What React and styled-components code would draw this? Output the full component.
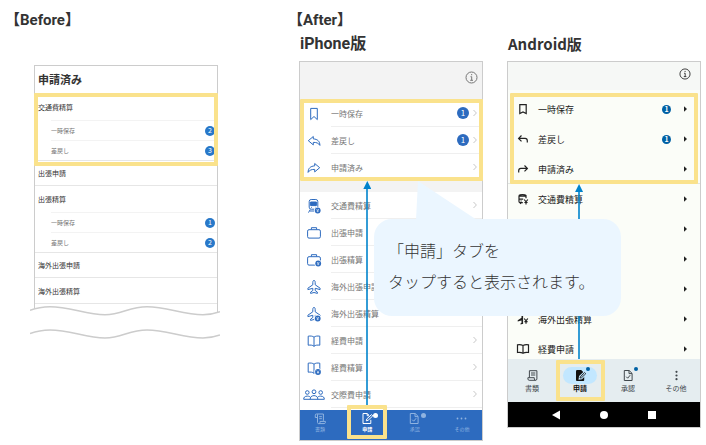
import React from "react";
import styled, { createGlobalStyle, css } from "styled-components";

const GlobalStyle = createGlobalStyle`
  * {
    box-sizing: border-box;
  }
  body {
    margin: 0;
    background: #fff;
    color: #333;
    font-family: "Noto Sans CJK JP", sans-serif;
  }
  button {
    background: transparent;
    border: 0;
    color: inherit;
    cursor: pointer;
    font: inherit;
    margin: 0;
    padding: 0;
  }
  a {
    color: inherit;
    text-decoration: none;
  }
  svg {
    display: block;
  }
`;

const Page = styled.main`
  display: grid;
  grid-template-columns: 216fr 414fr;
  gap: 67px;
  padding: 8px 5px 4px 4px;
`;

const Title = styled.h2`
  margin: 0;
  padding-left: 1px;
  font-size: 15px;
  line-height: 24px;
  font-weight: bold;
  font-family: Roboto, "Noto Sans CJK JP", sans-serif;
`;

const Label = styled.h3`
  margin: 0 0 5px;
  padding-left: 1px;
  font-size: ${p => (p.$android ? 15 : 16)}px;
  line-height: 24px;
  font-weight: bold;
  font-family: ${p => (p.$android ? "" : "Roboto, ")}"Noto Sans CJK JP", sans-serif;
`;

const Highlight = styled.span`
  position: absolute;
  inset: ${p => p.$inset};
  border: 4px solid #fae28c;
  border-radius: 1px;
  pointer-events: none;
  z-index: 2;
`;

const Group = styled.div`
  position: relative;
`;

const Badge = styled.span`
  display: flex;
  align-items: center;
  justify-content: center;
  flex: none;
  width: ${p => p.$size}px;
  height: ${p => p.$size}px;
  border-radius: 50%;
  background: ${p => p.$color};
  color: #fff;
  font-size: ${p => p.$font || 7}px;
  line-height: 1;
  font-weight: ${p => (p.$bold ? "bold" : "normal")};
`;

/* Before */

const OldScreen = styled.div`
  margin: 33px 2px 0 30px;
  padding-bottom: 8px;
  border: 1px solid #ccc;
  border-bottom: 0;
`;

const OldHeader = styled.h3`
  margin: 0;
  padding: 0 0 2px 3px;
  font-size: 11px;
  line-height: 26px;
  font-weight: bold;
`;

const OldRow = styled.a`
  display: flex;
  align-items: center;
  height: 26px;
  padding-left: 3px;
  border-bottom: 1px solid ${p => (p.$plain ? "transparent" : "#e6e6e6")};
  font-size: 7px;
`;

const OldSubRow = styled.a`
  display: flex;
  align-items: center;
  justify-content: space-between;
  height: 20px;
  margin-left: 16px;
  padding-right: 2px;
  border-top: 1px solid #f3f3f3;
  color: #777;
  font-size: 6px;
`;

const Divider = styled.div`
  height: 1px;
  margin-bottom: -1px;
  background: #e6e6e6;
`;

const Waves = styled.svg`
  position: relative;
  width: calc(100% - 26px);
  height: auto;
  margin: -8px 0 0 26px;
`;

/* After */

const Phones = styled.div`
  position: relative;
  display: grid;
  grid-template-columns: 184fr 194fr;
  gap: 24px;
  align-items: start;
  margin-left: 12px;
`;

const Screen = styled.div`
  position: relative;
  border: 1px solid #ccc;
  background: ${p => (p.$android ? "#fbfdf8" : "#fff")};
`;

const Header = styled.header`
  display: flex;
  justify-content: flex-end;
  ${p =>
    p.$android
      ? css`
          height: 32px;
          padding: 5px 9px 0 0;
          background: linear-gradient(#f6f8f6 28px, #fbfdf8 28px);
        `
      : css`
          height: 38px;
          padding: 9px 4px 0 0;
          background: #f3f3f3;
        `};
`;

const InfoButton = styled.button`
  height: 13px;
  color: ${p => (p.$android ? "#333" : "#777")};
`;

const Spacer = styled.div`
  height: 11px;
  background: #f3f3f3;
`;

const IosRow = styled.a`
  display: flex;
  align-items: center;
  gap: 6px;
  height: 27px;
  padding-left: 3px;
  color: #2d6bbf;
`;

const IosBody = styled.span`
  display: flex;
  flex: 1;
  align-items: center;
  gap: 4px;
  height: 27px;
  padding-right: 5px;
  border-bottom: 1px solid #efefef;
  color: #777;
  font-size: 8px;
`;

const AndroidList = styled.div`
  height: 175px;
  overflow: hidden;
  box-shadow: 0 -1px #e1e5e2;
`;

const AndroidRow = styled.a`
  display: flex;
  align-items: center;
  gap: 5px;
  height: 30px;
  padding: 0 13px 0 5px;
  color: #222;
  font-size: 9px;
`;

const RowEnd = styled.span`
  display: flex;
  align-items: center;
  gap: ${p => p.$gap}px;
  margin-left: auto;
`;

const RowText = styled.span`
  white-space: nowrap;
`;

const IosTabs = styled.nav`
  display: flex;
  justify-content: space-between;
  height: 30px;
  margin-top: 2px;
  background: #2d6bbf;
`;

const IosTab = styled.button`
  position: relative;
  display: flex;
  flex-direction: column;
  align-items: center;
  width: 40px;
  padding-top: 2px;
  color: ${p => (p.$active ? "#fff" : "#8fb3e0")};
  font-size: 5px;
  line-height: 7px;
  font-weight: ${p => (p.$active ? "bold" : "normal")};
`;

const AndroidTabs = styled.nav`
  display: grid;
  grid-template-columns: repeat(4, 1fr);
  height: 43px;
  background: #e5edf0;
`;

const AndroidTab = styled.button`
  position: relative;
  display: flex;
  flex-direction: column;
  align-items: center;
  padding-top: 8px;
  color: ${p => (p.$active ? "#111" : "#41484d")};
  font-size: 7px;
  line-height: 8px;
  font-weight: ${p => (p.$active ? "bold" : "normal")};
`;

const Pill = styled.span`
  display: flex;
  align-items: center;
  justify-content: center;
  width: 34px;
  height: 17px;
  border-radius: 9px;
  background: ${p => (p.$active ? "#c2e7ff" : "transparent")};
`;

const Dot = styled.span`
  position: absolute;
  top: ${p => (p.$android ? 8 : 3)}px;
  left: calc(50% + 6px);
  width: ${p => (p.$android ? 4 : 5)}px;
  height: ${p => (p.$android ? 4 : 5)}px;
  border-radius: 50%;
  background: ${p => p.$color};
`;

const SystemBar = styled.div`
  display: flex;
  justify-content: space-around;
  height: 25px;
  padding: 0 24px;
  background: #000;
  color: #fff;
`;

const SystemButton = styled.button`
  display: flex;
  align-items: center;
  justify-content: center;
  width: 24px;
`;

const Arrow = styled.span`
  position: absolute;
  top: ${p => p.$top}px;
  bottom: ${p => p.$bottom}px;
  left: calc(37% - 4px);
  display: flex;
  flex-direction: column;
  align-items: center;
  width: 8px;
  pointer-events: none;
  z-index: 1;

  &::before {
    content: "";
    width: 8px;
    height: 8px;
    background: #0083cc;
    clip-path: polygon(50% 0, 100% 100%, 0 100%);
  }
  &::after {
    content: "";
    flex: 1;
    width: 2px;
    background: #0083cc;
    opacity: 0.8;
  }
`;

const Callout = styled.p`
  position: absolute;
  top: 187px;
  left: 75px;
  margin: 0;
  padding: 16px 27px 19px 14px;
  border-radius: 18px;
  background: #ebf6ff;
  font-size: 16px;
  font-weight: 300;
  line-height: 31px;
  white-space: nowrap;
  z-index: 3;

  &::before {
    content: "";
    position: absolute;
    top: -38px;
    left: 42px;
    width: 61px;
    height: 39px;
    background: #ebf6ff;
    clip-path: polygon(2px 0, 100% 100%, 0 100%);
  }
`;

const Yen = ({ x, y }) => (
  <g>
    <circle cx={x} cy={y} r="3.7" fill="#fff" stroke="none" />
    <circle cx={x} cy={y} r="2.9" fill="currentColor" stroke="none" />
    <path
      d={`M${x - 1.2} ${y - 1.5}l1.2 1.4 1.2-1.4M${x} ${y}v1.7M${x - 1.1} ${y + 0.5}h2.2`}
      stroke="#fff"
      strokeWidth=".6"
    />
  </g>
);

const planePath =
  "M11 2.4c-.9 0-1.2 1.2-1.2 2.2v2.2l-4.9 3.4v1.4l4.9-1.3v2.2l-2.2 1.6v1.3l3.4-.9 3.4.9v-1.3l-2.2-1.6v-2.2l4.9 1.3v-1.4l-4.9-3.4V4.6c0-1-.3-2.2-1.2-2.2z";
const bookPath =
  "M11 5.2C9.500 4 7.500 3.800 5.200 4.200v9C7.500 12.900 9.500 13 11 14.300c1.500-1.300 3.500-1.400 5.800-1.100v-9c-2.300-.4-4.300-.2-5.800 1zV14.300";
const bagPath =
  "M6 5.700h10a1.400 1.400 0 0 1 1.400 1.400v5.600a1.400 1.400 0 0 1-1.400 1.400H6a1.400 1.400 0 0 1-1.400-1.400V7.100A1.400 1.400 0 0 1 6 5.700zM8.400 5.500V3.700h5.200v1.800";

const iosIcons = {
  bookmark: <path d="M7.700 3.400h6.600v11.200L11 11.500l-3.300 3.100z" />,
  reply: (
    <path d="M10.300 4.500L5.300 8.700l5 4.200v-2.500c3-.1 5.200.6 6.600 3 0-4-2.300-6.300-6.600-6.500z" />
  ),
  forward: (
    <path d="M11.700 4.500l5 4.200-5 4.200v-2.500c-3-.1-5.200.6-6.600 3 0-4 2.300-6.300 6.600-6.500z" />
  ),
  train: (
    <g>
      <rect x="6.200" y="2.500" width="8.600" height="9.700" rx="2" />
      <path d="M7.600 5h5.800v3.600H7.600z" fill="currentColor" />
      <path d="M8 10.400h.8M12.200 10.400h.8M7.200 12.600l-1.700 3M7 14h5" />
      <Yen x={14.7} y={13.5} />
    </g>
  ),
  bag: <path d={bagPath} />,
  bagYen: (
    <g>
      <path d={bagPath} />
      <Yen x={15.2} y={12.5} />
    </g>
  ),
  plane: <path d={planePath} />,
  planeYen: (
    <g>
      <path d={planePath} />
      <Yen x={14.7} y={13.5} />
    </g>
  ),
  book: <path d={bookPath} />,
  bookYen: (
    <g>
      <path d={bookPath} />
      <Yen x={15} y={13} />
    </g>
  ),
  people: (
    <g>
      <circle cx="4.300" cy="6.500" r="1.800" />
      <circle cx="11" cy="5.800" r="1.900" />
      <circle cx="17.700" cy="6.500" r="1.800" />
      <path d="M.7 13.300c0-2 .9-3 3.600-3.200 1.800.1 2.700.5 3.200 1.400M21.300 13.300c0-2-.9-3-3.600-3.200-1.800.1-2.700.5-3.200 1.400M.7 13.300h20.600M7.200 13.300c0-2.300 1.100-3.500 3.800-3.700 2.700.2 3.800 1.400 3.800 3.700" />
    </g>
  )
};

const androidIcons = {
  bookmark: <path d="M6.800 4.700h6.400v8.800L10 12l-3.200 1.500z" />,
  reply: <path d="M8.500 5.500L5.600 8.400l2.900 2.900M5.900 8.400h6.200c1.400 0 2.200 1 2.200 2.300v1.800" />,
  forward: <path d="M11.500 5.500l2.900 2.900-2.900 2.900M14.100 8.400H7.900c-1.400 0-2.200 1-2.200 2.300v1.800" />,
  train: (
    <g>
      <path d="M6 5.500c1-1.200 6-1.200 7 0v2.700M6 5.500v6c0 .8.500 1.200 1.200 1.200h2.600M6 6.200h7M6 9.200h4.200" />
      <path d="M7.500 11h1.200M7 13.800l1-1" />
      <path d="M11.200 9.500l1.800 2.300 1.800-2.300M13 11.800v2.700M11.400 12.500h3.200" strokeWidth="1.200" />
    </g>
  ),
  plane: (
    <g>
      <path
        d="M9.300 4c-.5 0-.8.5-.8 1v2.800L4.700 10.300v1.200l3.800-1.100v2.300l-1 .9v.8l1.800-.5.8.2V5c0-.5-.3-1-.8-1z"
        fill="currentColor"
        stroke="none"
      />
      <path d="M11.200 8.500l1.800 2.300 1.800-2.300M13 10.800v3M11.400 11.700h3.200" strokeWidth="1.200" />
    </g>
  ),
  book: <path d="M10 5.500C8.500 4.700 6.500 4.500 4.500 4.800v7.700c2-.3 4-.1 5.500.7 1.500-.8 3.500-1 5.500-.7V4.800c-2-.3-4-.1-5.500.7zv7.500" />
};

const IosIcon = ({ name }) => (
  <svg
    width="22"
    height="18"
    viewBox="0 0 22 18"
    fill="none"
    stroke="currentColor"
    strokeWidth="1"
    strokeLinejoin="round"
    aria-hidden="true"
  >
    {iosIcons[name]}
  </svg>
);

const AndroidIcon = ({ name }) => (
  <svg
    width="20"
    height="18"
    viewBox="0 0 20 18"
    fill="none"
    stroke="currentColor"
    strokeWidth="1.200"
    aria-hidden="true"
  >
    {androidIcons[name]}
  </svg>
);

const InfoIcon = ({ size }) => (
  <svg width={size} height={size} viewBox="0 0 13 13" fill="none" stroke="currentColor">
    <circle cx="6.500" cy="6.500" r="5.500" />
    <path d="M5.500 5.700h1.200v3.600M5.200 9.300h2.800M6 3.700h1.200" />
  </svg>
);

const tabIcons = {
  scroll: (
    <path d="M3.500 5.500H1.300V3.200c0-.8.400-1.200 1.100-1.200h7v6.800M3.500 2.300v8.200M5.200 4.700h2.700M5.200 6.700h2.700M3.500 10.600c0 .6.400 1 1 1h5.700c.7 0 1.200-.5 1.200-1.200v-1H6v1c0 .7-.5 1.200-1.200 1.200" />
  ),
  edit: (
    <path d="M9.800 7.800v3.700H2V1.500h4.300l1.600 1.700M6.200 1.700v2h1.700M5.300 8.800l.5-1.900 4.800-4.300 1.200 1.300-4.700 4.400z" />
  ),
  check: <path d="M2.300 1.500h4.900l2.900 2.900v7.100H2.300zM7 1.700v2.900h3M4.200 7.700l1.500 1.500 2.500-3" />,
  dots: (
    <g fill="currentColor" stroke="none">
      <circle cx="2.500" cy="6.500" r=".9" />
      <circle cx="6.500" cy="6.500" r=".9" />
      <circle cx="10.500" cy="6.500" r=".9" />
    </g>
  ),
  receipt: (
    <path d="M3.400 8.600V1.700h7.500v8.200c0 .8-.5 1.400-1.300 1.400H3.200c-.8 0-1.300-.6-1.300-1.400V8.700h6.400v1.200c0 .8.500 1.400 1.300 1.400M5 4h4.300M5 6h4.300" />
  ),
  editFilled: (
    <g>
      <path
        d="M2 2.300C2 1.600 2.500 1 3.200 1h4l3 3v7c0 .6-.5 1-1.200 1H3.200C2.500 12 2 11.500 2 11z"
        fill="currentColor"
        stroke="none"
      />
      <path d="M5.700 9.500l.3-1.900 4.500-4.300 1.500 1.500-4.500 4.400z" stroke="#c2e7ff" strokeWidth="2" />
      <path d="M6 9l.3-1.400 4.300-4.100 1.200 1.200-4.300 4.100z" strokeWidth=".8" />
    </g>
  ),
  more: (
    <g fill="currentColor" stroke="none">
      <circle cx="6.500" cy="2.800" r="1.100" />
      <circle cx="6.500" cy="6.500" r="1.100" />
      <circle cx="6.500" cy="10.200" r="1.100" />
    </g>
  )
};

const TabIcon = ({ name }) => (
  <svg width="13" height="13" viewBox="0 0 13 13" fill="none" stroke="currentColor">
    {tabIcons[name]}
  </svg>
);

const Chevron = () => (
  <svg width="4" height="8" viewBox="0 0 4 8" fill="none" stroke="#c8c8c8">
    <path d="M.5 1L3.400 4 .5 7" />
  </svg>
);

const Triangle = () => (
  <svg width="3" height="6" viewBox="0 0 3 6" fill="currentColor">
    <path d="M0 .3L3 3 0 5.700z" />
  </svg>
);

const oldRows = [
  { name: "出張申請" },
  { name: "出張精算", children: [["一時保存", 1], ["差戻し", 2]] },
  { name: "海外出張申請" },
  { name: "海外出張精算" }
];

const statusRows = [
  { icon: "bookmark", name: "一時保存", count: 1 },
  { icon: "reply", name: "差戻し", count: 1 },
  { icon: "forward", name: "申請済み" }
];

const iosRows = [
  { icon: "train", name: "交通費精算" },
  { icon: "bag", name: "出張申請" },
  { icon: "bagYen", name: "出張精算" },
  { icon: "plane", name: "海外出張申請" },
  { icon: "planeYen", name: "海外出張精算" },
  { icon: "book", name: "経費申請" },
  { icon: "bookYen", name: "経費精算" },
  { icon: "people", name: "交際費申請" }
];

// the empty rows lie under the callout, only their arrows show
const androidRows = [
  { icon: "train", name: "交通費精算" },
  {},
  {},
  {},
  { icon: "plane", name: "海外出張精算" },
  { icon: "book", name: "経費申請" }
];

const OldItem = ({ name, children = [] }) => (
  <>
    <OldRow href="#" $plain={children.length > 0}>
      {name}
    </OldRow>
    {children.map(([label, count]) => (
      <OldSubRow href="#" key={label}>
        {label}
        <Badge $size={10} $color="#2878c9">
          {count}
        </Badge>
      </OldSubRow>
    ))}
    {children.length > 0 && <Divider />}
  </>
);

const IosItem = ({ icon, name, count }) => (
  <IosRow href="#">
    <IosIcon name={icon} />
    <IosBody>
      <RowText>{name}</RowText>
      <RowEnd $gap={4}>
        {count && (
          <Badge $size={12} $color="#2d6bbf" $font={8}>
            {count}
          </Badge>
        )}
        <Chevron />
      </RowEnd>
    </IosBody>
  </IosRow>
);

const AndroidItem = ({ icon, name, count }) => (
  <AndroidRow href="#">
    {icon && <AndroidIcon name={icon} />}
    {name && <RowText>{name}</RowText>}
    <RowEnd $gap={13}>
      {count && (
        <Badge $size={9} $color="#0061a4" $bold>
          {count}
        </Badge>
      )}
      <Triangle />
    </RowEnd>
  </AndroidRow>
);

const Before = () => (
  <section>
    <Title>【Before】</Title>
    <OldScreen>
      <OldHeader>申請済み</OldHeader>
      <Group>
        <OldItem name="交通費精算" children={[["一時保存", 2], ["差戻し", 3]]} />
        <Highlight $inset="-1px -1px -5px" />
      </Group>
      {oldRows.map(row => (
        <OldItem key={row.name} {...row} />
      ))}
    </OldScreen>
    <Waves viewBox="0 0 190 38" fill="none" stroke="#ccc" strokeWidth="1.500">
      <path
        d="M0 6.300C6 4 12 2.700 20 2.700c20 0 36 8 55 8 17 0 24-8 42-8 20 0 36 8 56 8 7 0 12-1.200 17-3V38H0z"
        fill="#fff"
        stroke="none"
      />
      <path d="M0 6.300C6 4 12 2.700 20 2.700c20 0 36 8 55 8 17 0 24-8 42-8 20 0 36 8 56 8 7 0 12-1.200 17-3" />
      <path d="M0 29.600C6 27.300 12 26 20 26c20 0 36 8 55 8 17 0 24-8 42-8 20 0 36 8 56 8 7 0 12-1.200 17-3" />
    </Waves>
  </section>
);

const IPhone = () => (
  <div>
    <Label>iPhone版</Label>
    <Screen>
      <Header>
        <InfoButton aria-label="情報">
          <InfoIcon size={13} />
        </InfoButton>
      </Header>
      <Group>
        {statusRows.map(row => (
          <IosItem key={row.name} {...row} />
        ))}
        <Highlight $inset="-1px -1px 0 0" />
      </Group>
      <Spacer />
      <div>
        {iosRows.map(row => (
          <IosItem key={row.name} {...row} />
        ))}
      </div>
      <IosTabs>
        <IosTab>
          <TabIcon name="scroll" />
          書類
        </IosTab>
        <IosTab $active>
          <TabIcon name="edit" />
          申請
          <Dot $color="#fff" />
          <Highlight $inset="-5px 0 1px" />
        </IosTab>
        <IosTab>
          <TabIcon name="check" />
          承認
          <Dot $color="#8fb3e0" />
        </IosTab>
        <IosTab>
          <TabIcon name="dots" />
          その他
        </IosTab>
      </IosTabs>
      <Arrow $top={119} $bottom={34} />
    </Screen>
  </div>
);

const Android = () => (
  <div>
    <Label $android>Android版</Label>
    <Screen $android>
      <Header $android>
        <InfoButton $android aria-label="情報">
          <InfoIcon size={12} />
        </InfoButton>
      </Header>
      <Group>
        {statusRows.map(row => (
          <AndroidItem key={row.name} {...row} />
        ))}
        <Highlight $inset="-1px 2px 0" />
      </Group>
      <AndroidList>
        {androidRows.map((row, i) => (
          <AndroidItem key={i} {...row} />
        ))}
      </AndroidList>
      <AndroidTabs>
        <AndroidTab>
          <Pill>
            <TabIcon name="receipt" />
          </Pill>
          書類
        </AndroidTab>
        <AndroidTab $active>
          <Pill $active>
            <TabIcon name="editFilled" />
          </Pill>
          申請
          <Dot $android $color="#0061a4" />
          <Highlight $inset="1px -1px 1px 0" />
        </AndroidTab>
        <AndroidTab>
          <Pill>
            <TabIcon name="check" />
          </Pill>
          承認
          <Dot $android $color="#0061a4" />
        </AndroidTab>
        <AndroidTab>
          <Pill>
            <TabIcon name="more" />
          </Pill>
          その他
        </AndroidTab>
      </AndroidTabs>
      <SystemBar>
        <SystemButton aria-label="戻る">
          <svg width="8" height="10" viewBox="0 0 8 10" fill="currentColor">
            <path d="M8 .5v9L0 5z" />
          </svg>
        </SystemButton>
        <SystemButton aria-label="ホーム">
          <svg width="8" height="8" viewBox="0 0 8 8" fill="currentColor">
            <circle cx="4" cy="4" r="4" />
          </svg>
        </SystemButton>
        <SystemButton aria-label="履歴">
          <svg width="8" height="8" viewBox="0 0 8 8" fill="currentColor">
            <path d="M0 0h8v8H0z" />
          </svg>
        </SystemButton>
      </SystemBar>
      <Arrow $top={122} $bottom={68} />
    </Screen>
  </div>
);

const App = () => (
  <>
    <GlobalStyle />
    <Page>
      <Before />
      <section>
        <Title>【After】</Title>
        <Phones>
          <IPhone />
          <Android />
          <Callout>
            「申請」タブを
            <br />
            タップすると表示されます。
          </Callout>
        </Phones>
      </section>
    </Page>
  </>
);

export default App;
